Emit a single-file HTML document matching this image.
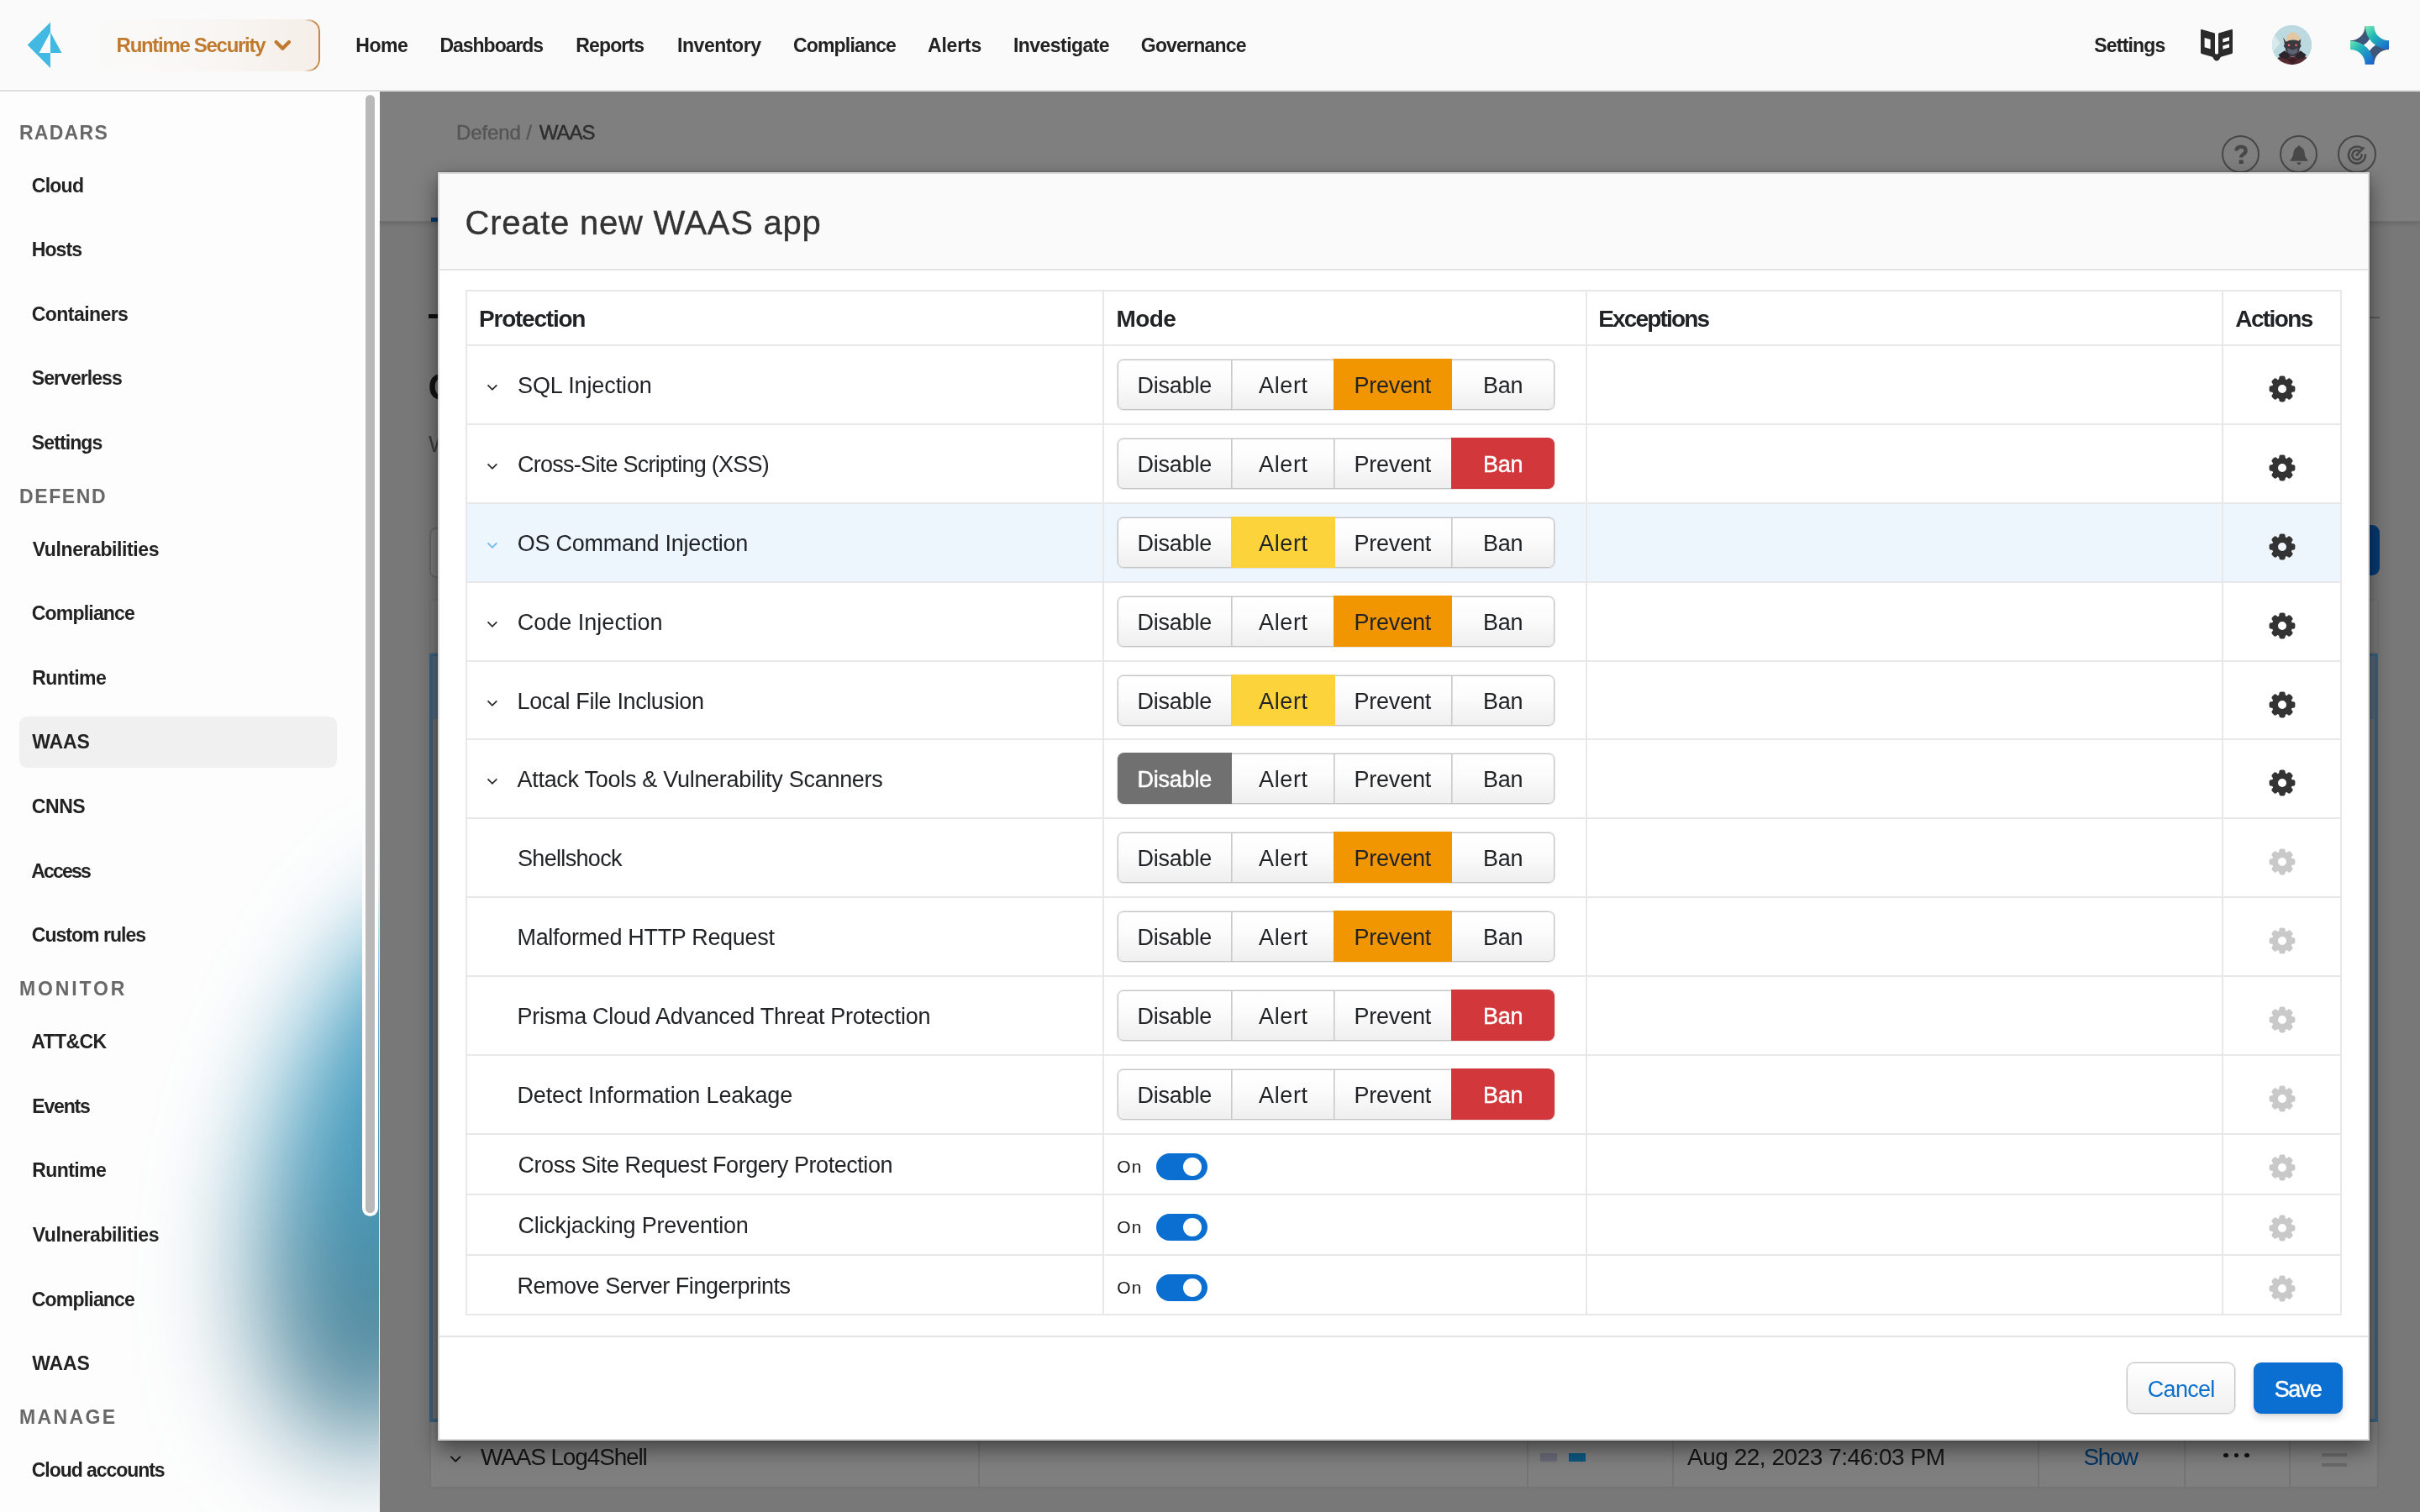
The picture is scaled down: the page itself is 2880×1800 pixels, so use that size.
<!DOCTYPE html>
<html lang="en">
<head>
<meta charset="utf-8">
<title>Prisma Cloud - Defend / WAAS</title>
<style>

*{box-sizing:border-box;margin:0;padding:0}
html,body{width:2880px;height:1800px;overflow:hidden;background:#fdfdfd}
body{position:relative;font-family:"Liberation Sans",sans-serif;color:#222;-webkit-font-smoothing:antialiased}
ul{list-style:none}
a{color:inherit;text-decoration:none}
.t{position:absolute;white-space:pre;line-height:1;display:block;font-weight:400;font-style:normal}
button{border:0;font:inherit;background:none;padding:0}
.abs{position:absolute}
svg{position:absolute;display:block;overflow:visible}

/* ---------- top navigation ---------- */
.topnav,.sidebar,.main,.modal{will-change:transform}
.topnav{position:absolute;left:0;top:0;width:2880px;height:109px;background:#fafafa;border-bottom:2px solid #dedede;z-index:30}
.pill{position:absolute;left:96px;top:23px;width:285px;height:61.5px;border-radius:14px;
  background:linear-gradient(90deg,rgba(250,250,250,0) 0%,rgba(249,246,243,.6) 45%,#f5eee8 100%)}
.pill::after{content:"";position:absolute;inset:0;border-radius:14px;border:2px solid #c88746;
  -webkit-mask-image:linear-gradient(90deg,transparent 0,transparent 93.5%,#000 98%);mask-image:linear-gradient(90deg,transparent 0,transparent 93.5%,#000 98%)}
.avatar{position:absolute;left:2703.5px;top:29.8px;width:47.6px;height:47.6px;border-radius:50%;overflow:hidden;background:#bddbe2}

/* ---------- sidebar ---------- */
.sidebar{position:absolute;left:0;top:109px;width:451px;height:1691px;z-index:20;overflow:hidden;background:#fdfdfd}
.glow{position:absolute;left:326px;top:950px;width:330px;height:680px;border-radius:50%;
  background:linear-gradient(180deg,#3f9fc6 0%,#4399ba 50%,#52899e 78%,#6b9aab 100%);filter:blur(64px);transform:rotate(15deg)}
.sidebar .active{position:absolute;left:23px;top:744px;width:377.5px;height:60.5px;border-radius:9px;background:#f0f0f0}
.scroll{position:absolute;left:431px;top:0;width:19px;height:1339px;border-radius:0 0 9.5px 9.5px;background:#fdfdfd}
.scroll i{position:absolute;left:4px;top:4px;width:11px;height:1331px;border-radius:5.5px;background:#b9b9b9}

/* ---------- page behind the dialog ---------- */
.main{position:absolute;left:451px;top:109px;width:2429px;height:1691px;background:#f0f0f0;overflow:hidden;z-index:1}
.main .pagehead{position:absolute;left:0;top:0;width:2429px;height:155px;background:#fff;border-bottom:1px solid #e2e2e2;box-shadow:0 3px 5px rgba(0,0,0,.12)}
.round{position:absolute;top:52px;width:45.2px;height:45.2px;border:2px solid #8e8e8e;border-radius:50%}
.overlay{position:absolute;left:452px;top:109px;width:2428px;height:1691px;background:rgba(0,0,0,.5);z-index:10}

/* ---------- dialog ---------- */
.modal{position:absolute;left:521px;top:205px;width:2299px;height:1510px;background:#fff;z-index:40;
  border:2px solid #d8d8d8;box-shadow:0 10px 24px rgba(0,0,0,.48),0 0 3px rgba(0,0,0,.3)}
.modal-head{position:absolute;left:0;top:0;right:0;height:115px;background:#fafafa;border-bottom:2px solid #e3e3e3}
.modal-foot{position:absolute;left:0;right:0;bottom:0;border-top:2px solid #e3e3e3;background:#fff}
.grid{position:absolute;border:2px solid #e8e8eb;background:#fff}
.row{position:absolute;left:0;right:0;border-top:2px solid #e8e8eb}
.row.hl{background:#edf5fd}
.vline{position:absolute;top:0;bottom:0;width:2px;background:#e8e8eb}
.bg{position:absolute;width:520px;height:60px;border-radius:7px;border:1px solid #c4c4c4;
  background:linear-gradient(#ffffff 0%,#fcfcfc 40%,#efefef 100%);box-shadow:0 0 0 1px rgba(196,196,196,.4)}
.bg .seg{position:absolute;top:-2px;height:61px}
.bg .sep{position:absolute;top:0;bottom:0;width:2px;background:linear-gradient(90deg,#c9c9c9 0,#c9c9c9 50%,#dcdcdc 50%)}
.bg .on-disable{background:#707070;border-radius:8px 0 0 8px}
.bg .on-alert{background:#fdd33c}
.bg .on-prevent{background:#f19600}
.bg .on-ban{background:#d1373b;border-radius:0 8px 8px 0}
.toggle{position:absolute;width:61.5px;height:32.5px;border-radius:16.5px;background:#0a6fd1}
.toggle i{position:absolute;left:32px;top:5.2px;width:22px;height:22px;border-radius:50%;background:#fff}
.btn{position:absolute;height:60.5px;border-radius:9px;cursor:pointer}
.btn.cancel{width:129px;border:1px solid #c4c4c4;box-shadow:0 0 0 1px rgba(196,196,196,.4);background:linear-gradient(#ffffff,#f0f0f0)}
.btn.save{width:105.5px;background:#0a6fd1;box-shadow:0 5px 10px rgba(0,0,0,.13),0 1px 3px rgba(0,0,0,.1)}

</style>
</head>
<body>
<header class="topnav"><svg class="logo" style="left:32px;top:26px" width="42" height="56" viewBox="32 26 42 56" aria-label="Prisma Cloud"><path fill="#41b9e2" fill-rule="evenodd" d="M59.95 26.6 L32.7 53.6 L59.95 80.9 L59.95 62.9 L73.4 62.9 L59.95 38.3 Z M59.95 38.3 L46.5 62.9 L59.95 62.9 Z"/></svg><div class="pill"></div><a class="t" style="left:138.6px;top:42.0px;font-size:24px;letter-spacing:-1.30px;font-weight:700;color:#c07a2e;">Runtime Security</a><svg style="left:324px;top:45px" width="24" height="18" viewBox="324 45 24 18"><path d="M328.6 49.9 L336.3 57.7 L344 49.9" fill="none" stroke="#c07a2e" stroke-width="4.2" stroke-linecap="round" stroke-linejoin="round"/></svg><nav><ul><li><a class="t" style="left:423.2px;top:43.0px;font-size:23px;letter-spacing:-0.42px;font-weight:700;color:#222;">Home</a></li><li><a class="t" style="left:523.5px;top:43.0px;font-size:23px;letter-spacing:-1.03px;font-weight:700;color:#222;">Dashboards</a></li><li><a class="t" style="left:685.2px;top:43.0px;font-size:23px;letter-spacing:-0.83px;font-weight:700;color:#222;">Reports</a></li><li><a class="t" style="left:806.0px;top:43.0px;font-size:23px;letter-spacing:-0.44px;font-weight:700;color:#222;">Inventory</a></li><li><a class="t" style="left:944.0px;top:43.0px;font-size:23px;letter-spacing:-0.83px;font-weight:700;color:#222;">Compliance</a></li><li><a class="t" style="left:1104.0px;top:43.0px;font-size:23px;letter-spacing:-0.20px;font-weight:700;color:#222;">Alerts</a></li><li><a class="t" style="left:1206.0px;top:43.0px;font-size:23px;letter-spacing:-0.55px;font-weight:700;color:#222;">Investigate</a></li><li><a class="t" style="left:1357.8px;top:43.0px;font-size:23px;letter-spacing:-0.81px;font-weight:700;color:#222;">Governance</a></li></ul></nav><a class="t" style="left:2492.3px;top:43.0px;font-size:23px;letter-spacing:-0.81px;font-weight:700;color:#222;">Settings</a><svg style="left:2618px;top:34px" width="40" height="40" viewBox="0 0 40 40" aria-label="Docs"><path fill="#2b2b2b" d="M2.2 1 Q1 .7 1 2 V28.6 Q1 29.6 2 29.9 L14.2 33.4 Q15.3 33.8 15.9 35 Q17.4 38.4 20 38.4 Q22.6 38.4 24.1 35 Q24.7 33.8 25.8 33.4 L38 29.9 Q39 29.6 39 28.6 V2 Q39 .7 37.8 1 L23 5.2 Q22 5.5 22 6.6 V29.3 Q22 30.6 20 30.6 Q18 30.6 18 29.3 V6.6 Q18 5.5 17 5.2 Z"/><path fill="#fafafa" d="M5.6 11 L12.6 13 V24.3 L5.6 22.3 Z M27.3 12.3 L35 10.1 V14.4 L27.3 16.6 Z M27.3 20.4 L35 18.2 V22.5 L27.3 24.7 Z"/></svg><div class="avatar"><svg style="left:0;top:0" width="47.6" height="47.6" viewBox="0 0 48 48" role="img" aria-label="User avatar"><rect width="48" height="48" fill="#bcd9e0"/><path fill="#d9e9ec" d="M0 10 L9.5 21.5 L0 33 Z"/><path fill="#cfe3e8" d="M9.5 21.5 L4 12 L0 10 Z"/><path fill="#e2c7a5" d="M17 19 Q16.5 12 21 10 L24.5 8 L28 9.6 Q33 11.5 33.5 17 L32.5 20.5 L24 17.5 L17.5 21 Z"/><path fill="#3b3940" d="M13.2 14.5 L16.6 20 Q24 15.8 31.6 19 L34.6 16.6 L33.8 22.6 L35 25 L33.2 27.6 Q33 33.5 27.8 36.8 L24.6 38 L21 36.8 Q16 33.5 15.8 27.6 L13.8 25.2 L15 22.4 Z"/><path fill="#5b6273" d="M18 27.6 L24.4 29.8 L31 27.6 L30 33.2 L24.5 35.6 L19 33.2 Z"/><circle cx="20.2" cy="24" r="1.35" fill="#ff6a78"/><circle cx="28.8" cy="24" r="1.35" fill="#ff6a78"/><path fill="#552a31" d="M5 41 L14 33.5 L24.5 38.5 L34.5 33.5 L44 41 L40 48 H8 Z"/><path fill="#29252b" d="M7.5 35.5 L15 30.5 L21.5 36 L18.5 41 L10.5 38.8 Z M34 30.5 L41 35.5 L38 38.8 L30.5 41 L27.5 36 Z"/><path fill="#3f1f26" d="M18.5 41 L24.5 38.5 L30.5 41 L24.5 48 Z"/><path fill="#e3bba6" d="M3 42.5 L12 44.5 L24.5 48 L37 44.5 L45 42.5 L41 48 H7 Z"/></svg></div><svg style="left:2797.4px;top:31px" width="46" height="45.4" viewBox="0 0 46 46" preserveAspectRatio="none" role="img" aria-label="Copilot"><defs><linearGradient id="g1" gradientUnits="userSpaceOnUse" x1="20" y1="0" x2="46" y2="26"><stop offset="0" stop-color="#7be7b4"/><stop offset=".35" stop-color="#21bdb4"/><stop offset="1" stop-color="#1c66d2"/></linearGradient><linearGradient id="g2" gradientUnits="userSpaceOnUse" x1="0" y1="20" x2="26" y2="46"><stop offset="0" stop-color="#62e2b2"/><stop offset=".35" stop-color="#22b3bb"/><stop offset="1" stop-color="#1b63d3"/></linearGradient></defs><path fill="#3e5679" d="M17.6 0 L28.1 0 A28.1 28.1 0 0 1 0 28.1 L0 17.6 A17.6 17.6 0 0 0 17.6 0 Z"/><path fill="#3e5679" d="M46 28.4 L46 17.9 A28.1 28.1 0 0 0 17.9 46 L28.4 46 A17.6 17.6 0 0 1 46 28.4 Z"/><path fill="url(#g1)" d="M28.4 0 L17.9 0 A28.1 28.1 0 0 0 46 28.1 L46 17.6 A17.6 17.6 0 0 1 28.4 0 Z"/><path fill="url(#g2)" d="M0 28.4 L0 17.9 A28.1 28.1 0 0 1 28.1 46 L17.6 46 A17.6 17.6 0 0 0 0 28.4 Z"/></svg></header>
<aside class="sidebar"><div class="glow"></div><div class="active"></div><section><h3 class="t" style="left:22.9px;top:37.6px;font-size:23px;letter-spacing:1.30px;font-weight:700;color:#686868;">RADARS</h3><ul><li><a class="t" style="left:37.8px;top:100.6px;font-size:23px;letter-spacing:-0.75px;font-weight:700;color:#222;">Cloud</a></li><li><a class="t" style="left:37.8px;top:177.2px;font-size:23px;letter-spacing:-0.94px;font-weight:700;color:#222;">Hosts</a></li><li><a class="t" style="left:37.8px;top:253.8px;font-size:23px;letter-spacing:-0.56px;font-weight:700;color:#222;">Containers</a></li><li><a class="t" style="left:37.8px;top:330.4px;font-size:23px;letter-spacing:-0.94px;font-weight:700;color:#222;">Serverless</a></li><li><a class="t" style="left:37.8px;top:407.0px;font-size:23px;letter-spacing:-0.89px;font-weight:700;color:#222;">Settings</a></li></ul></section><section><h3 class="t" style="left:22.9px;top:470.6px;font-size:23px;letter-spacing:1.65px;font-weight:700;color:#686868;">DEFEND</h3><ul><li><a class="t" style="left:38.8px;top:533.6px;font-size:23px;letter-spacing:-0.41px;font-weight:700;color:#222;">Vulnerabilities</a></li><li><a class="t" style="left:37.8px;top:610.2px;font-size:23px;letter-spacing:-0.81px;font-weight:700;color:#222;">Compliance</a></li><li><a class="t" style="left:38.2px;top:686.8px;font-size:23px;letter-spacing:-0.58px;font-weight:700;color:#222;">Runtime</a></li><li><a class="t" style="left:38.3px;top:763.4px;font-size:23px;letter-spacing:-0.17px;font-weight:700;color:#222;">WAAS</a></li><li><a class="t" style="left:37.8px;top:840.0px;font-size:23px;letter-spacing:-0.42px;font-weight:700;color:#222;">CNNS</a></li><li><a class="t" style="left:37.3px;top:916.6px;font-size:23px;letter-spacing:-1.80px;font-weight:700;color:#222;">Access</a></li><li><a class="t" style="left:37.8px;top:993.2px;font-size:23px;letter-spacing:-0.98px;font-weight:700;color:#222;">Custom rules</a></li></ul></section><section><h3 class="t" style="left:22.9px;top:1056.8px;font-size:23px;letter-spacing:2.88px;font-weight:700;color:#686868;">MONITOR</h3><ul><li><a class="t" style="left:37.3px;top:1120.2px;font-size:23px;letter-spacing:-0.60px;font-weight:700;color:#222;">ATT&amp;CK</a></li><li><a class="t" style="left:38.2px;top:1196.8px;font-size:23px;letter-spacing:-1.15px;font-weight:700;color:#222;">Events</a></li><li><a class="t" style="left:38.2px;top:1273.4px;font-size:23px;letter-spacing:-0.58px;font-weight:700;color:#222;">Runtime</a></li><li><a class="t" style="left:38.8px;top:1350.0px;font-size:23px;letter-spacing:-0.41px;font-weight:700;color:#222;">Vulnerabilities</a></li><li><a class="t" style="left:37.8px;top:1426.6px;font-size:23px;letter-spacing:-0.81px;font-weight:700;color:#222;">Compliance</a></li><li><a class="t" style="left:38.3px;top:1503.2px;font-size:23px;letter-spacing:-0.17px;font-weight:700;color:#222;">WAAS</a></li></ul></section><section><h3 class="t" style="left:22.9px;top:1566.6px;font-size:23px;letter-spacing:2.40px;font-weight:700;color:#686868;">MANAGE</h3><ul><li><a class="t" style="left:37.8px;top:1629.8px;font-size:23px;letter-spacing:-1.05px;font-weight:700;color:#222;">Cloud accounts</a></li></ul></section><div class="scroll"><i></i></div></aside>
<main class="main"><div class="pagehead"><nav aria-label="breadcrumb"><a class="t" style="left:92.0px;top:36.9px;font-size:24px;letter-spacing:-0.10px;color:#aaaaaa;-webkit-text-stroke:.4px #aaaaaa;">Defend /</a><span class="t" style="left:190.8px;top:36.9px;font-size:24px;letter-spacing:-1.03px;color:#5c5c5c;-webkit-text-stroke:.5px #5c5c5c;">WAAS</span></nav><div class="abs" style="left:61.7px;top:149.5px;width:150.0px;height:5.5px;background:#0a6ed0"></div><div class="round" style="left:2193.1px;border-color:#8e8e8e"><svg style="left:.6px;top:.6px" width="40" height="40" viewBox="0 0 40 40"><path d="M14.6 15.6 Q14.6 10.6 20 10.6 Q25.6 10.6 25.6 15.3 Q25.6 18 22.8 19.6 Q20.2 21 20.2 23.6" fill="none" stroke="#909090" stroke-width="4.4"/><rect x="17.6" y="26.4" width="5.2" height="4.6" fill="#909090"/></svg></div><div class="round" style="left:2262.2px;border-color:#8e8e8e"><svg style="left:.6px;top:.6px" width="40" height="40" viewBox="0 0 40 40"><path fill="#909090" d="M20 9.2 Q21.6 9.2 21.9 10.9 Q26.3 12.5 26.7 18.3 Q27 23.6 30.4 26.4 V27.8 H9.6 V26.4 Q13 23.6 13.3 18.3 Q13.7 12.5 18.1 10.9 Q18.4 9.2 20 9.2 Z M17.2 29.4 H22.8 Q22.4 32 20 32 Q17.6 32 17.2 29.4 Z"/></svg></div><div class="round" style="left:2331.4px;border-color:#8e8e8e"><svg style="left:.6px;top:.6px" width="40" height="40" viewBox="0 0 40 40"><g fill="none" stroke="#909090" stroke-width="2.6" stroke-linecap="round"><path d="M25.5 12.2 A10 10 0 1 0 30 20.5"/><path d="M23 15.8 A5.6 5.6 0 1 0 25.6 20.4"/><path d="M20 20.3 L27.6 12.2"/></g><circle cx="20" cy="20.3" r="1.8" fill="#909090"/></svg></div></div><div class="abs" style="left:58.5px;top:268.3px;width:2322.5px;height:2.0px;background:#b4b4b4"></div><div class="abs" style="left:58.5px;top:264.7px;width:120.0px;height:5.6px;background:#202020"></div><h1 class="t" style="left:58.5px;top:330.0px;font-size:44px;font-weight:700;color:#242424;">Container WAAS policy</h1><p class="t" style="left:59.0px;top:407.0px;font-size:27px;color:#787878;">Web-Application and API Security rules</p><div class="abs" style="left:59.5px;top:519.0px;width:1700.0px;height:60.0px;border:2px solid #d2d2d2;border-radius:8px;background:#fafafa"></div><div class="abs" style="left:2209.0px;top:515.5px;width:171.7px;height:60.8px;background:#0a74e4;border-radius:9px"></div><div class="abs" style="left:60.0px;top:604.0px;width:2319.5px;height:1058.5px;border:2px solid #e8e8e8;background:#fff"></div><div class="abs" style="left:60.0px;top:604.0px;width:2319.5px;height:65.0px;border:2px solid #e8e8e8;background:#f6f6f6"></div><div class="abs" style="left:60.4px;top:668.8px;width:2318.6px;height:915.0px;border:4px solid #78c4ff;background:#dadee0"></div><div class="abs" style="left:64.0px;top:672.4px;width:2311.4px;height:75.0px;background:#acd0f6"></div><div class="abs" style="left:712.5px;top:1584.0px;width:2.0px;height:78.0px;background:#e8e8e8"></div><div class="abs" style="left:1365.5px;top:1584.0px;width:2.0px;height:78.0px;background:#e8e8e8"></div><div class="abs" style="left:1539.0px;top:1584.0px;width:2.0px;height:78.0px;background:#e8e8e8"></div><div class="abs" style="left:1974.0px;top:1584.0px;width:2.0px;height:78.0px;background:#e8e8e8"></div><div class="abs" style="left:2148.0px;top:1584.0px;width:2.0px;height:78.0px;background:#e8e8e8"></div><div class="abs" style="left:2273.0px;top:1584.0px;width:2.0px;height:78.0px;background:#e8e8e8"></div><svg style="left:81.5px;top:1621.5px" width="18" height="12" viewBox="0 0 18 12"><path d="M3.4 2.8 L9.2 8.6 L15 2.8" fill="none" stroke="#282828" stroke-width="1.9"/></svg><span class="t" style="left:121.0px;top:1611.8px;font-size:28px;letter-spacing:-1.15px;color:#2a2a2a;">WAAS Log4Shell</span><div class="abs" style="left:1382.0px;top:1621.0px;width:19.5px;height:9.5px;background:#d2d4f0"></div><div class="abs" style="left:1416.0px;top:1621.0px;width:19.5px;height:9.5px;background:#1ab0ff"></div><span class="t" style="left:1557.0px;top:1611.8px;font-size:28px;letter-spacing:-0.48px;color:#2a2a2a;">Aug 22, 2023 7:46:03 PM</span><a class="t" style="left:2028.5px;top:1611.8px;font-size:28px;letter-spacing:-1.50px;color:#006acc;">Show</a><div class="abs" style="left:2195.2px;top:1620.8px;width:5.6px;height:5.6px;background:#222222;border-radius:50%"></div><div class="abs" style="left:2207.8px;top:1620.8px;width:5.6px;height:5.6px;background:#222222;border-radius:50%"></div><div class="abs" style="left:2220.4px;top:1620.8px;width:5.6px;height:5.6px;background:#222222;border-radius:50%"></div><div class="abs" style="left:2312.0px;top:1621.4px;width:30.0px;height:4.0px;background:#d4d4d4"></div><div class="abs" style="left:2312.0px;top:1632.6px;width:30.0px;height:4.0px;background:#d4d4d4"></div></main><div class="overlay"></div>
<div class="modal" role="dialog" aria-modal="true" aria-label="Create new WAAS app"><div class="modal-head"><h2 class="t" style="left:30.5px;top:38.0px;font-size:40px;letter-spacing:0.75px;color:#333;-webkit-text-stroke:.35px #333;">Create new WAAS app</h2></div><div class="grid" role="table" style="left:31px;top:138px;width:2233px;height:1221px"><div class="hrow" role="row"><span class="t" style="left:14.0px;top:19.0px;font-size:28px;letter-spacing:-1.22px;font-weight:700;color:#212326;">Protection</span><span class="t" style="left:772.5px;top:19.0px;font-size:28px;letter-spacing:-0.58px;font-weight:700;color:#212326;">Mode</span><span class="t" style="left:1346.2px;top:19.0px;font-size:28px;letter-spacing:-1.82px;font-weight:700;color:#212326;">Exceptions</span><span class="t" style="left:2104.3px;top:19.0px;font-size:28px;letter-spacing:-1.62px;font-weight:700;color:#212326;">Actions</span></div><div class="row" role="row" style="top:63px;height:94px"><svg style="left:21.6px;top:43.8px" width="16" height="11" viewBox="0 0 16 11"><path d="M2.5 2.4 L7.9 7.8 L13.3 2.4" fill="none" stroke="#2a2a2a" stroke-width="1.8"/></svg><span class="t" style="left:60.0px;top:34.0px;font-size:27px;letter-spacing:-0.10px;color:#212326;">SQL Injection</span><div class="bg" role="radiogroup" style="left:774px;top:16px"><i class="sep" style="left:134px"></i><span class="t" style="left:22.5px;top:17.0px;font-size:27px;letter-spacing:-0.21px;color:#212326;">Disable</span><span class="t" style="left:167.0px;top:17.0px;font-size:27px;letter-spacing:0.62px;color:#212326;">Alert</span><b class="seg on-prevent" role="radio" aria-checked="true" style="left:256px;width:141px"></b><span class="t" style="left:280.5px;top:17.0px;font-size:27px;letter-spacing:-0.22px;color:#212326;">Prevent</span><span class="t" style="left:434.0px;top:17.0px;font-size:27px;letter-spacing:-0.25px;color:#212326;">Ban</span></div><svg style="left:2143.7px;top:34.6px" width="32" height="32" viewBox="-16 -16 32 32" role="img" aria-label="Settings"><g fill="#333"><rect x="-3.7" y="-15.4" width="7.4" height="8" rx="2.3" transform="rotate(0)"/><rect x="-3.7" y="-15.4" width="7.4" height="8" rx="2.3" transform="rotate(45)"/><rect x="-3.7" y="-15.4" width="7.4" height="8" rx="2.3" transform="rotate(90)"/><rect x="-3.7" y="-15.4" width="7.4" height="8" rx="2.3" transform="rotate(135)"/><rect x="-3.7" y="-15.4" width="7.4" height="8" rx="2.3" transform="rotate(180)"/><rect x="-3.7" y="-15.4" width="7.4" height="8" rx="2.3" transform="rotate(225)"/><rect x="-3.7" y="-15.4" width="7.4" height="8" rx="2.3" transform="rotate(270)"/><rect x="-3.7" y="-15.4" width="7.4" height="8" rx="2.3" transform="rotate(315)"/><path fill-rule="evenodd" d="M0 -12.2 A12.2 12.2 0 1 0 0 12.2 A12.2 12.2 0 1 0 0 -12.2 Z M0 -5 A5 5 0 1 1 0 5 A5 5 0 1 1 0 -5 Z"/></g></svg></div><div class="row" role="row" style="top:157px;height:94px"><svg style="left:21.6px;top:43.8px" width="16" height="11" viewBox="0 0 16 11"><path d="M2.5 2.4 L7.9 7.8 L13.3 2.4" fill="none" stroke="#2a2a2a" stroke-width="1.8"/></svg><span class="t" style="left:60.0px;top:34.0px;font-size:27px;letter-spacing:-0.73px;color:#212326;">Cross-Site Scripting (XSS)</span><div class="bg" role="radiogroup" style="left:774px;top:16px"><i class="sep" style="left:134px"></i><i class="sep" style="left:256px"></i><span class="t" style="left:22.5px;top:17.0px;font-size:27px;letter-spacing:-0.21px;color:#212326;">Disable</span><span class="t" style="left:167.0px;top:17.0px;font-size:27px;letter-spacing:0.62px;color:#212326;">Alert</span><span class="t" style="left:280.5px;top:17.0px;font-size:27px;letter-spacing:-0.22px;color:#212326;">Prevent</span><b class="seg on-ban" role="radio" aria-checked="true" style="left:396px;width:123px"></b><span class="t" style="left:434.0px;top:17.0px;font-size:27px;letter-spacing:-0.25px;color:#fff;-webkit-text-stroke:.45px #fff;">Ban</span></div><svg style="left:2143.7px;top:34.6px" width="32" height="32" viewBox="-16 -16 32 32" role="img" aria-label="Settings"><g fill="#333"><rect x="-3.7" y="-15.4" width="7.4" height="8" rx="2.3" transform="rotate(0)"/><rect x="-3.7" y="-15.4" width="7.4" height="8" rx="2.3" transform="rotate(45)"/><rect x="-3.7" y="-15.4" width="7.4" height="8" rx="2.3" transform="rotate(90)"/><rect x="-3.7" y="-15.4" width="7.4" height="8" rx="2.3" transform="rotate(135)"/><rect x="-3.7" y="-15.4" width="7.4" height="8" rx="2.3" transform="rotate(180)"/><rect x="-3.7" y="-15.4" width="7.4" height="8" rx="2.3" transform="rotate(225)"/><rect x="-3.7" y="-15.4" width="7.4" height="8" rx="2.3" transform="rotate(270)"/><rect x="-3.7" y="-15.4" width="7.4" height="8" rx="2.3" transform="rotate(315)"/><path fill-rule="evenodd" d="M0 -12.2 A12.2 12.2 0 1 0 0 12.2 A12.2 12.2 0 1 0 0 -12.2 Z M0 -5 A5 5 0 1 1 0 5 A5 5 0 1 1 0 -5 Z"/></g></svg></div><div class="row hl" role="row" style="top:251px;height:94px"><svg style="left:21.6px;top:43.8px" width="16" height="11" viewBox="0 0 16 11"><path d="M2.5 2.4 L7.9 7.8 L13.3 2.4" fill="none" stroke="#6db8ee" stroke-width="1.8"/></svg><span class="t" style="left:59.8px;top:34.0px;font-size:27px;letter-spacing:-0.25px;color:#212326;">OS Command Injection</span><div class="bg" role="radiogroup" style="left:774px;top:16px"><i class="sep" style="left:396px"></i><span class="t" style="left:22.5px;top:17.0px;font-size:27px;letter-spacing:-0.21px;color:#212326;">Disable</span><b class="seg on-alert" role="radio" aria-checked="true" style="left:134px;width:124px"></b><span class="t" style="left:167.0px;top:17.0px;font-size:27px;letter-spacing:0.62px;color:#212326;">Alert</span><span class="t" style="left:280.5px;top:17.0px;font-size:27px;letter-spacing:-0.22px;color:#212326;">Prevent</span><span class="t" style="left:434.0px;top:17.0px;font-size:27px;letter-spacing:-0.25px;color:#212326;">Ban</span></div><svg style="left:2143.7px;top:34.6px" width="32" height="32" viewBox="-16 -16 32 32" role="img" aria-label="Settings"><g fill="#333"><rect x="-3.7" y="-15.4" width="7.4" height="8" rx="2.3" transform="rotate(0)"/><rect x="-3.7" y="-15.4" width="7.4" height="8" rx="2.3" transform="rotate(45)"/><rect x="-3.7" y="-15.4" width="7.4" height="8" rx="2.3" transform="rotate(90)"/><rect x="-3.7" y="-15.4" width="7.4" height="8" rx="2.3" transform="rotate(135)"/><rect x="-3.7" y="-15.4" width="7.4" height="8" rx="2.3" transform="rotate(180)"/><rect x="-3.7" y="-15.4" width="7.4" height="8" rx="2.3" transform="rotate(225)"/><rect x="-3.7" y="-15.4" width="7.4" height="8" rx="2.3" transform="rotate(270)"/><rect x="-3.7" y="-15.4" width="7.4" height="8" rx="2.3" transform="rotate(315)"/><path fill-rule="evenodd" d="M0 -12.2 A12.2 12.2 0 1 0 0 12.2 A12.2 12.2 0 1 0 0 -12.2 Z M0 -5 A5 5 0 1 1 0 5 A5 5 0 1 1 0 -5 Z"/></g></svg></div><div class="row" role="row" style="top:345px;height:94px"><svg style="left:21.6px;top:43.8px" width="16" height="11" viewBox="0 0 16 11"><path d="M2.5 2.4 L7.9 7.8 L13.3 2.4" fill="none" stroke="#2a2a2a" stroke-width="1.8"/></svg><span class="t" style="left:59.8px;top:34.0px;font-size:27px;color:#212326;">Code Injection</span><div class="bg" role="radiogroup" style="left:774px;top:16px"><i class="sep" style="left:134px"></i><span class="t" style="left:22.5px;top:17.0px;font-size:27px;letter-spacing:-0.21px;color:#212326;">Disable</span><span class="t" style="left:167.0px;top:17.0px;font-size:27px;letter-spacing:0.62px;color:#212326;">Alert</span><b class="seg on-prevent" role="radio" aria-checked="true" style="left:256px;width:141px"></b><span class="t" style="left:280.5px;top:17.0px;font-size:27px;letter-spacing:-0.22px;color:#212326;">Prevent</span><span class="t" style="left:434.0px;top:17.0px;font-size:27px;letter-spacing:-0.25px;color:#212326;">Ban</span></div><svg style="left:2143.7px;top:34.6px" width="32" height="32" viewBox="-16 -16 32 32" role="img" aria-label="Settings"><g fill="#333"><rect x="-3.7" y="-15.4" width="7.4" height="8" rx="2.3" transform="rotate(0)"/><rect x="-3.7" y="-15.4" width="7.4" height="8" rx="2.3" transform="rotate(45)"/><rect x="-3.7" y="-15.4" width="7.4" height="8" rx="2.3" transform="rotate(90)"/><rect x="-3.7" y="-15.4" width="7.4" height="8" rx="2.3" transform="rotate(135)"/><rect x="-3.7" y="-15.4" width="7.4" height="8" rx="2.3" transform="rotate(180)"/><rect x="-3.7" y="-15.4" width="7.4" height="8" rx="2.3" transform="rotate(225)"/><rect x="-3.7" y="-15.4" width="7.4" height="8" rx="2.3" transform="rotate(270)"/><rect x="-3.7" y="-15.4" width="7.4" height="8" rx="2.3" transform="rotate(315)"/><path fill-rule="evenodd" d="M0 -12.2 A12.2 12.2 0 1 0 0 12.2 A12.2 12.2 0 1 0 0 -12.2 Z M0 -5 A5 5 0 1 1 0 5 A5 5 0 1 1 0 -5 Z"/></g></svg></div><div class="row" role="row" style="top:439px;height:93px"><svg style="left:21.6px;top:43.8px" width="16" height="11" viewBox="0 0 16 11"><path d="M2.5 2.4 L7.9 7.8 L13.3 2.4" fill="none" stroke="#2a2a2a" stroke-width="1.8"/></svg><span class="t" style="left:59.5px;top:34.0px;font-size:27px;letter-spacing:-0.38px;color:#212326;">Local File Inclusion</span><div class="bg" role="radiogroup" style="left:774px;top:16px"><i class="sep" style="left:396px"></i><span class="t" style="left:22.5px;top:17.0px;font-size:27px;letter-spacing:-0.21px;color:#212326;">Disable</span><b class="seg on-alert" role="radio" aria-checked="true" style="left:134px;width:124px"></b><span class="t" style="left:167.0px;top:17.0px;font-size:27px;letter-spacing:0.62px;color:#212326;">Alert</span><span class="t" style="left:280.5px;top:17.0px;font-size:27px;letter-spacing:-0.22px;color:#212326;">Prevent</span><span class="t" style="left:434.0px;top:17.0px;font-size:27px;letter-spacing:-0.25px;color:#212326;">Ban</span></div><svg style="left:2143.7px;top:34.6px" width="32" height="32" viewBox="-16 -16 32 32" role="img" aria-label="Settings"><g fill="#333"><rect x="-3.7" y="-15.4" width="7.4" height="8" rx="2.3" transform="rotate(0)"/><rect x="-3.7" y="-15.4" width="7.4" height="8" rx="2.3" transform="rotate(45)"/><rect x="-3.7" y="-15.4" width="7.4" height="8" rx="2.3" transform="rotate(90)"/><rect x="-3.7" y="-15.4" width="7.4" height="8" rx="2.3" transform="rotate(135)"/><rect x="-3.7" y="-15.4" width="7.4" height="8" rx="2.3" transform="rotate(180)"/><rect x="-3.7" y="-15.4" width="7.4" height="8" rx="2.3" transform="rotate(225)"/><rect x="-3.7" y="-15.4" width="7.4" height="8" rx="2.3" transform="rotate(270)"/><rect x="-3.7" y="-15.4" width="7.4" height="8" rx="2.3" transform="rotate(315)"/><path fill-rule="evenodd" d="M0 -12.2 A12.2 12.2 0 1 0 0 12.2 A12.2 12.2 0 1 0 0 -12.2 Z M0 -5 A5 5 0 1 1 0 5 A5 5 0 1 1 0 -5 Z"/></g></svg></div><div class="row" role="row" style="top:532px;height:94px"><svg style="left:21.6px;top:43.8px" width="16" height="11" viewBox="0 0 16 11"><path d="M2.5 2.4 L7.9 7.8 L13.3 2.4" fill="none" stroke="#2a2a2a" stroke-width="1.8"/></svg><span class="t" style="left:59.5px;top:34.0px;font-size:27px;letter-spacing:-0.29px;color:#212326;">Attack Tools &amp; Vulnerability Scanners</span><div class="bg" role="radiogroup" style="left:774px;top:16px"><i class="sep" style="left:256px"></i><i class="sep" style="left:396px"></i><b class="seg on-disable" role="radio" aria-checked="true" style="left:-1px;width:136px"></b><span class="t" style="left:22.5px;top:17.0px;font-size:27px;letter-spacing:-0.21px;color:#fff;-webkit-text-stroke:.45px #fff;">Disable</span><span class="t" style="left:167.0px;top:17.0px;font-size:27px;letter-spacing:0.62px;color:#212326;">Alert</span><span class="t" style="left:280.5px;top:17.0px;font-size:27px;letter-spacing:-0.22px;color:#212326;">Prevent</span><span class="t" style="left:434.0px;top:17.0px;font-size:27px;letter-spacing:-0.25px;color:#212326;">Ban</span></div><svg style="left:2143.7px;top:34.6px" width="32" height="32" viewBox="-16 -16 32 32" role="img" aria-label="Settings"><g fill="#333"><rect x="-3.7" y="-15.4" width="7.4" height="8" rx="2.3" transform="rotate(0)"/><rect x="-3.7" y="-15.4" width="7.4" height="8" rx="2.3" transform="rotate(45)"/><rect x="-3.7" y="-15.4" width="7.4" height="8" rx="2.3" transform="rotate(90)"/><rect x="-3.7" y="-15.4" width="7.4" height="8" rx="2.3" transform="rotate(135)"/><rect x="-3.7" y="-15.4" width="7.4" height="8" rx="2.3" transform="rotate(180)"/><rect x="-3.7" y="-15.4" width="7.4" height="8" rx="2.3" transform="rotate(225)"/><rect x="-3.7" y="-15.4" width="7.4" height="8" rx="2.3" transform="rotate(270)"/><rect x="-3.7" y="-15.4" width="7.4" height="8" rx="2.3" transform="rotate(315)"/><path fill-rule="evenodd" d="M0 -12.2 A12.2 12.2 0 1 0 0 12.2 A12.2 12.2 0 1 0 0 -12.2 Z M0 -5 A5 5 0 1 1 0 5 A5 5 0 1 1 0 -5 Z"/></g></svg></div><div class="row" role="row" style="top:626px;height:94px"><span class="t" style="left:60.0px;top:34.0px;font-size:27px;letter-spacing:-0.67px;color:#212326;">Shellshock</span><div class="bg" role="radiogroup" style="left:774px;top:16px"><i class="sep" style="left:134px"></i><span class="t" style="left:22.5px;top:17.0px;font-size:27px;letter-spacing:-0.21px;color:#212326;">Disable</span><span class="t" style="left:167.0px;top:17.0px;font-size:27px;letter-spacing:0.62px;color:#212326;">Alert</span><b class="seg on-prevent" role="radio" aria-checked="true" style="left:256px;width:141px"></b><span class="t" style="left:280.5px;top:17.0px;font-size:27px;letter-spacing:-0.22px;color:#212326;">Prevent</span><span class="t" style="left:434.0px;top:17.0px;font-size:27px;letter-spacing:-0.25px;color:#212326;">Ban</span></div><svg style="left:2143.7px;top:34.6px" width="32" height="32" viewBox="-16 -16 32 32" role="img" aria-label="Settings"><g fill="#c9c9c9"><rect x="-3.7" y="-15.4" width="7.4" height="8" rx="2.3" transform="rotate(0)"/><rect x="-3.7" y="-15.4" width="7.4" height="8" rx="2.3" transform="rotate(45)"/><rect x="-3.7" y="-15.4" width="7.4" height="8" rx="2.3" transform="rotate(90)"/><rect x="-3.7" y="-15.4" width="7.4" height="8" rx="2.3" transform="rotate(135)"/><rect x="-3.7" y="-15.4" width="7.4" height="8" rx="2.3" transform="rotate(180)"/><rect x="-3.7" y="-15.4" width="7.4" height="8" rx="2.3" transform="rotate(225)"/><rect x="-3.7" y="-15.4" width="7.4" height="8" rx="2.3" transform="rotate(270)"/><rect x="-3.7" y="-15.4" width="7.4" height="8" rx="2.3" transform="rotate(315)"/><path fill-rule="evenodd" d="M0 -12.2 A12.2 12.2 0 1 0 0 12.2 A12.2 12.2 0 1 0 0 -12.2 Z M0 -5 A5 5 0 1 1 0 5 A5 5 0 1 1 0 -5 Z"/></g></svg></div><div class="row" role="row" style="top:720px;height:94px"><span class="t" style="left:59.5px;top:34.0px;font-size:27px;letter-spacing:-0.32px;color:#212326;">Malformed HTTP Request</span><div class="bg" role="radiogroup" style="left:774px;top:16px"><i class="sep" style="left:134px"></i><span class="t" style="left:22.5px;top:17.0px;font-size:27px;letter-spacing:-0.21px;color:#212326;">Disable</span><span class="t" style="left:167.0px;top:17.0px;font-size:27px;letter-spacing:0.62px;color:#212326;">Alert</span><b class="seg on-prevent" role="radio" aria-checked="true" style="left:256px;width:141px"></b><span class="t" style="left:280.5px;top:17.0px;font-size:27px;letter-spacing:-0.22px;color:#212326;">Prevent</span><span class="t" style="left:434.0px;top:17.0px;font-size:27px;letter-spacing:-0.25px;color:#212326;">Ban</span></div><svg style="left:2143.7px;top:34.6px" width="32" height="32" viewBox="-16 -16 32 32" role="img" aria-label="Settings"><g fill="#c9c9c9"><rect x="-3.7" y="-15.4" width="7.4" height="8" rx="2.3" transform="rotate(0)"/><rect x="-3.7" y="-15.4" width="7.4" height="8" rx="2.3" transform="rotate(45)"/><rect x="-3.7" y="-15.4" width="7.4" height="8" rx="2.3" transform="rotate(90)"/><rect x="-3.7" y="-15.4" width="7.4" height="8" rx="2.3" transform="rotate(135)"/><rect x="-3.7" y="-15.4" width="7.4" height="8" rx="2.3" transform="rotate(180)"/><rect x="-3.7" y="-15.4" width="7.4" height="8" rx="2.3" transform="rotate(225)"/><rect x="-3.7" y="-15.4" width="7.4" height="8" rx="2.3" transform="rotate(270)"/><rect x="-3.7" y="-15.4" width="7.4" height="8" rx="2.3" transform="rotate(315)"/><path fill-rule="evenodd" d="M0 -12.2 A12.2 12.2 0 1 0 0 12.2 A12.2 12.2 0 1 0 0 -12.2 Z M0 -5 A5 5 0 1 1 0 5 A5 5 0 1 1 0 -5 Z"/></g></svg></div><div class="row" role="row" style="top:814px;height:94px"><span class="t" style="left:59.5px;top:34.0px;font-size:27px;letter-spacing:-0.27px;color:#212326;">Prisma Cloud Advanced Threat Protection</span><div class="bg" role="radiogroup" style="left:774px;top:16px"><i class="sep" style="left:134px"></i><i class="sep" style="left:256px"></i><span class="t" style="left:22.5px;top:17.0px;font-size:27px;letter-spacing:-0.21px;color:#212326;">Disable</span><span class="t" style="left:167.0px;top:17.0px;font-size:27px;letter-spacing:0.62px;color:#212326;">Alert</span><span class="t" style="left:280.5px;top:17.0px;font-size:27px;letter-spacing:-0.22px;color:#212326;">Prevent</span><b class="seg on-ban" role="radio" aria-checked="true" style="left:396px;width:123px"></b><span class="t" style="left:434.0px;top:17.0px;font-size:27px;letter-spacing:-0.25px;color:#fff;-webkit-text-stroke:.45px #fff;">Ban</span></div><svg style="left:2143.7px;top:34.6px" width="32" height="32" viewBox="-16 -16 32 32" role="img" aria-label="Settings"><g fill="#c9c9c9"><rect x="-3.7" y="-15.4" width="7.4" height="8" rx="2.3" transform="rotate(0)"/><rect x="-3.7" y="-15.4" width="7.4" height="8" rx="2.3" transform="rotate(45)"/><rect x="-3.7" y="-15.4" width="7.4" height="8" rx="2.3" transform="rotate(90)"/><rect x="-3.7" y="-15.4" width="7.4" height="8" rx="2.3" transform="rotate(135)"/><rect x="-3.7" y="-15.4" width="7.4" height="8" rx="2.3" transform="rotate(180)"/><rect x="-3.7" y="-15.4" width="7.4" height="8" rx="2.3" transform="rotate(225)"/><rect x="-3.7" y="-15.4" width="7.4" height="8" rx="2.3" transform="rotate(270)"/><rect x="-3.7" y="-15.4" width="7.4" height="8" rx="2.3" transform="rotate(315)"/><path fill-rule="evenodd" d="M0 -12.2 A12.2 12.2 0 1 0 0 12.2 A12.2 12.2 0 1 0 0 -12.2 Z M0 -5 A5 5 0 1 1 0 5 A5 5 0 1 1 0 -5 Z"/></g></svg></div><div class="row" role="row" style="top:908px;height:94px"><span class="t" style="left:59.5px;top:34.0px;font-size:27px;letter-spacing:-0.16px;color:#212326;">Detect Information Leakage</span><div class="bg" role="radiogroup" style="left:774px;top:16px"><i class="sep" style="left:134px"></i><i class="sep" style="left:256px"></i><span class="t" style="left:22.5px;top:17.0px;font-size:27px;letter-spacing:-0.21px;color:#212326;">Disable</span><span class="t" style="left:167.0px;top:17.0px;font-size:27px;letter-spacing:0.62px;color:#212326;">Alert</span><span class="t" style="left:280.5px;top:17.0px;font-size:27px;letter-spacing:-0.22px;color:#212326;">Prevent</span><b class="seg on-ban" role="radio" aria-checked="true" style="left:396px;width:123px"></b><span class="t" style="left:434.0px;top:17.0px;font-size:27px;letter-spacing:-0.25px;color:#fff;-webkit-text-stroke:.45px #fff;">Ban</span></div><svg style="left:2143.7px;top:34.6px" width="32" height="32" viewBox="-16 -16 32 32" role="img" aria-label="Settings"><g fill="#c9c9c9"><rect x="-3.7" y="-15.4" width="7.4" height="8" rx="2.3" transform="rotate(0)"/><rect x="-3.7" y="-15.4" width="7.4" height="8" rx="2.3" transform="rotate(45)"/><rect x="-3.7" y="-15.4" width="7.4" height="8" rx="2.3" transform="rotate(90)"/><rect x="-3.7" y="-15.4" width="7.4" height="8" rx="2.3" transform="rotate(135)"/><rect x="-3.7" y="-15.4" width="7.4" height="8" rx="2.3" transform="rotate(180)"/><rect x="-3.7" y="-15.4" width="7.4" height="8" rx="2.3" transform="rotate(225)"/><rect x="-3.7" y="-15.4" width="7.4" height="8" rx="2.3" transform="rotate(270)"/><rect x="-3.7" y="-15.4" width="7.4" height="8" rx="2.3" transform="rotate(315)"/><path fill-rule="evenodd" d="M0 -12.2 A12.2 12.2 0 1 0 0 12.2 A12.2 12.2 0 1 0 0 -12.2 Z M0 -5 A5 5 0 1 1 0 5 A5 5 0 1 1 0 -5 Z"/></g></svg></div><div class="row" role="row" style="top:1002px;height:72px"><span class="t" style="left:60.5px;top:23.3px;font-size:27px;letter-spacing:-0.45px;color:#212326;">Cross Site Request Forgery Protection</span><span class="t" style="left:773.2px;top:26.6px;font-size:21px;letter-spacing:1.30px;color:#1a1a1a;">On</span><div class="toggle" role="switch" aria-checked="true" style="left:819.5px;top:21.6px"><i></i></div><svg style="left:2143.7px;top:23.0px" width="32" height="32" viewBox="-16 -16 32 32" role="img" aria-label="Settings"><g fill="#c9c9c9"><rect x="-3.7" y="-15.4" width="7.4" height="8" rx="2.3" transform="rotate(0)"/><rect x="-3.7" y="-15.4" width="7.4" height="8" rx="2.3" transform="rotate(45)"/><rect x="-3.7" y="-15.4" width="7.4" height="8" rx="2.3" transform="rotate(90)"/><rect x="-3.7" y="-15.4" width="7.4" height="8" rx="2.3" transform="rotate(135)"/><rect x="-3.7" y="-15.4" width="7.4" height="8" rx="2.3" transform="rotate(180)"/><rect x="-3.7" y="-15.4" width="7.4" height="8" rx="2.3" transform="rotate(225)"/><rect x="-3.7" y="-15.4" width="7.4" height="8" rx="2.3" transform="rotate(270)"/><rect x="-3.7" y="-15.4" width="7.4" height="8" rx="2.3" transform="rotate(315)"/><path fill-rule="evenodd" d="M0 -12.2 A12.2 12.2 0 1 0 0 12.2 A12.2 12.2 0 1 0 0 -12.2 Z M0 -5 A5 5 0 1 1 0 5 A5 5 0 1 1 0 -5 Z"/></g></svg></div><div class="row" role="row" style="top:1074px;height:72px"><span class="t" style="left:60.5px;top:23.3px;font-size:27px;letter-spacing:-0.22px;color:#212326;">Clickjacking Prevention</span><span class="t" style="left:773.2px;top:26.6px;font-size:21px;letter-spacing:1.30px;color:#1a1a1a;">On</span><div class="toggle" role="switch" aria-checked="true" style="left:819.5px;top:21.6px"><i></i></div><svg style="left:2143.7px;top:23.0px" width="32" height="32" viewBox="-16 -16 32 32" role="img" aria-label="Settings"><g fill="#c9c9c9"><rect x="-3.7" y="-15.4" width="7.4" height="8" rx="2.3" transform="rotate(0)"/><rect x="-3.7" y="-15.4" width="7.4" height="8" rx="2.3" transform="rotate(45)"/><rect x="-3.7" y="-15.4" width="7.4" height="8" rx="2.3" transform="rotate(90)"/><rect x="-3.7" y="-15.4" width="7.4" height="8" rx="2.3" transform="rotate(135)"/><rect x="-3.7" y="-15.4" width="7.4" height="8" rx="2.3" transform="rotate(180)"/><rect x="-3.7" y="-15.4" width="7.4" height="8" rx="2.3" transform="rotate(225)"/><rect x="-3.7" y="-15.4" width="7.4" height="8" rx="2.3" transform="rotate(270)"/><rect x="-3.7" y="-15.4" width="7.4" height="8" rx="2.3" transform="rotate(315)"/><path fill-rule="evenodd" d="M0 -12.2 A12.2 12.2 0 1 0 0 12.2 A12.2 12.2 0 1 0 0 -12.2 Z M0 -5 A5 5 0 1 1 0 5 A5 5 0 1 1 0 -5 Z"/></g></svg></div><div class="row" role="row" style="top:1146px;height:71px"><span class="t" style="left:59.5px;top:23.3px;font-size:27px;letter-spacing:-0.48px;color:#212326;">Remove Server Fingerprints</span><span class="t" style="left:773.2px;top:26.6px;font-size:21px;letter-spacing:1.30px;color:#1a1a1a;">On</span><div class="toggle" role="switch" aria-checked="true" style="left:819.5px;top:21.6px"><i></i></div><svg style="left:2143.7px;top:23.0px" width="32" height="32" viewBox="-16 -16 32 32" role="img" aria-label="Settings"><g fill="#c9c9c9"><rect x="-3.7" y="-15.4" width="7.4" height="8" rx="2.3" transform="rotate(0)"/><rect x="-3.7" y="-15.4" width="7.4" height="8" rx="2.3" transform="rotate(45)"/><rect x="-3.7" y="-15.4" width="7.4" height="8" rx="2.3" transform="rotate(90)"/><rect x="-3.7" y="-15.4" width="7.4" height="8" rx="2.3" transform="rotate(135)"/><rect x="-3.7" y="-15.4" width="7.4" height="8" rx="2.3" transform="rotate(180)"/><rect x="-3.7" y="-15.4" width="7.4" height="8" rx="2.3" transform="rotate(225)"/><rect x="-3.7" y="-15.4" width="7.4" height="8" rx="2.3" transform="rotate(270)"/><rect x="-3.7" y="-15.4" width="7.4" height="8" rx="2.3" transform="rotate(315)"/><path fill-rule="evenodd" d="M0 -12.2 A12.2 12.2 0 1 0 0 12.2 A12.2 12.2 0 1 0 0 -12.2 Z M0 -5 A5 5 0 1 1 0 5 A5 5 0 1 1 0 -5 Z"/></g></svg></div><i class="vline" style="left:756px"></i><i class="vline" style="left:1331px"></i><i class="vline" style="left:2088px"></i></div><div class="modal-foot" style="top:1383px"><button class="btn cancel" style="left:2008px;top:30px"><span class="t" style="left:23.8px;top:18.0px;font-size:27px;letter-spacing:-0.70px;color:#0b6fcd;">Cancel</span></button><button class="btn save" style="left:2159px;top:30px"><span class="t" style="left:24.8px;top:19.0px;font-size:27px;letter-spacing:-1.50px;color:#fff;-webkit-text-stroke:.45px #fff;">Save</span></button></div></div>
<script>(function(){function fit(){var w=window.innerWidth||2880,h=document.documentElement,b=document.body;if(Math.abs(w-2880)>2){var k=w/2880;h.style.width=w+"px";h.style.height=Math.round(1800*k)+"px";b.style.zoom=k;}else{h.style.width="";h.style.height="";b.style.zoom="";}}fit();window.addEventListener("resize",fit);})();</script>
</body>
</html>
